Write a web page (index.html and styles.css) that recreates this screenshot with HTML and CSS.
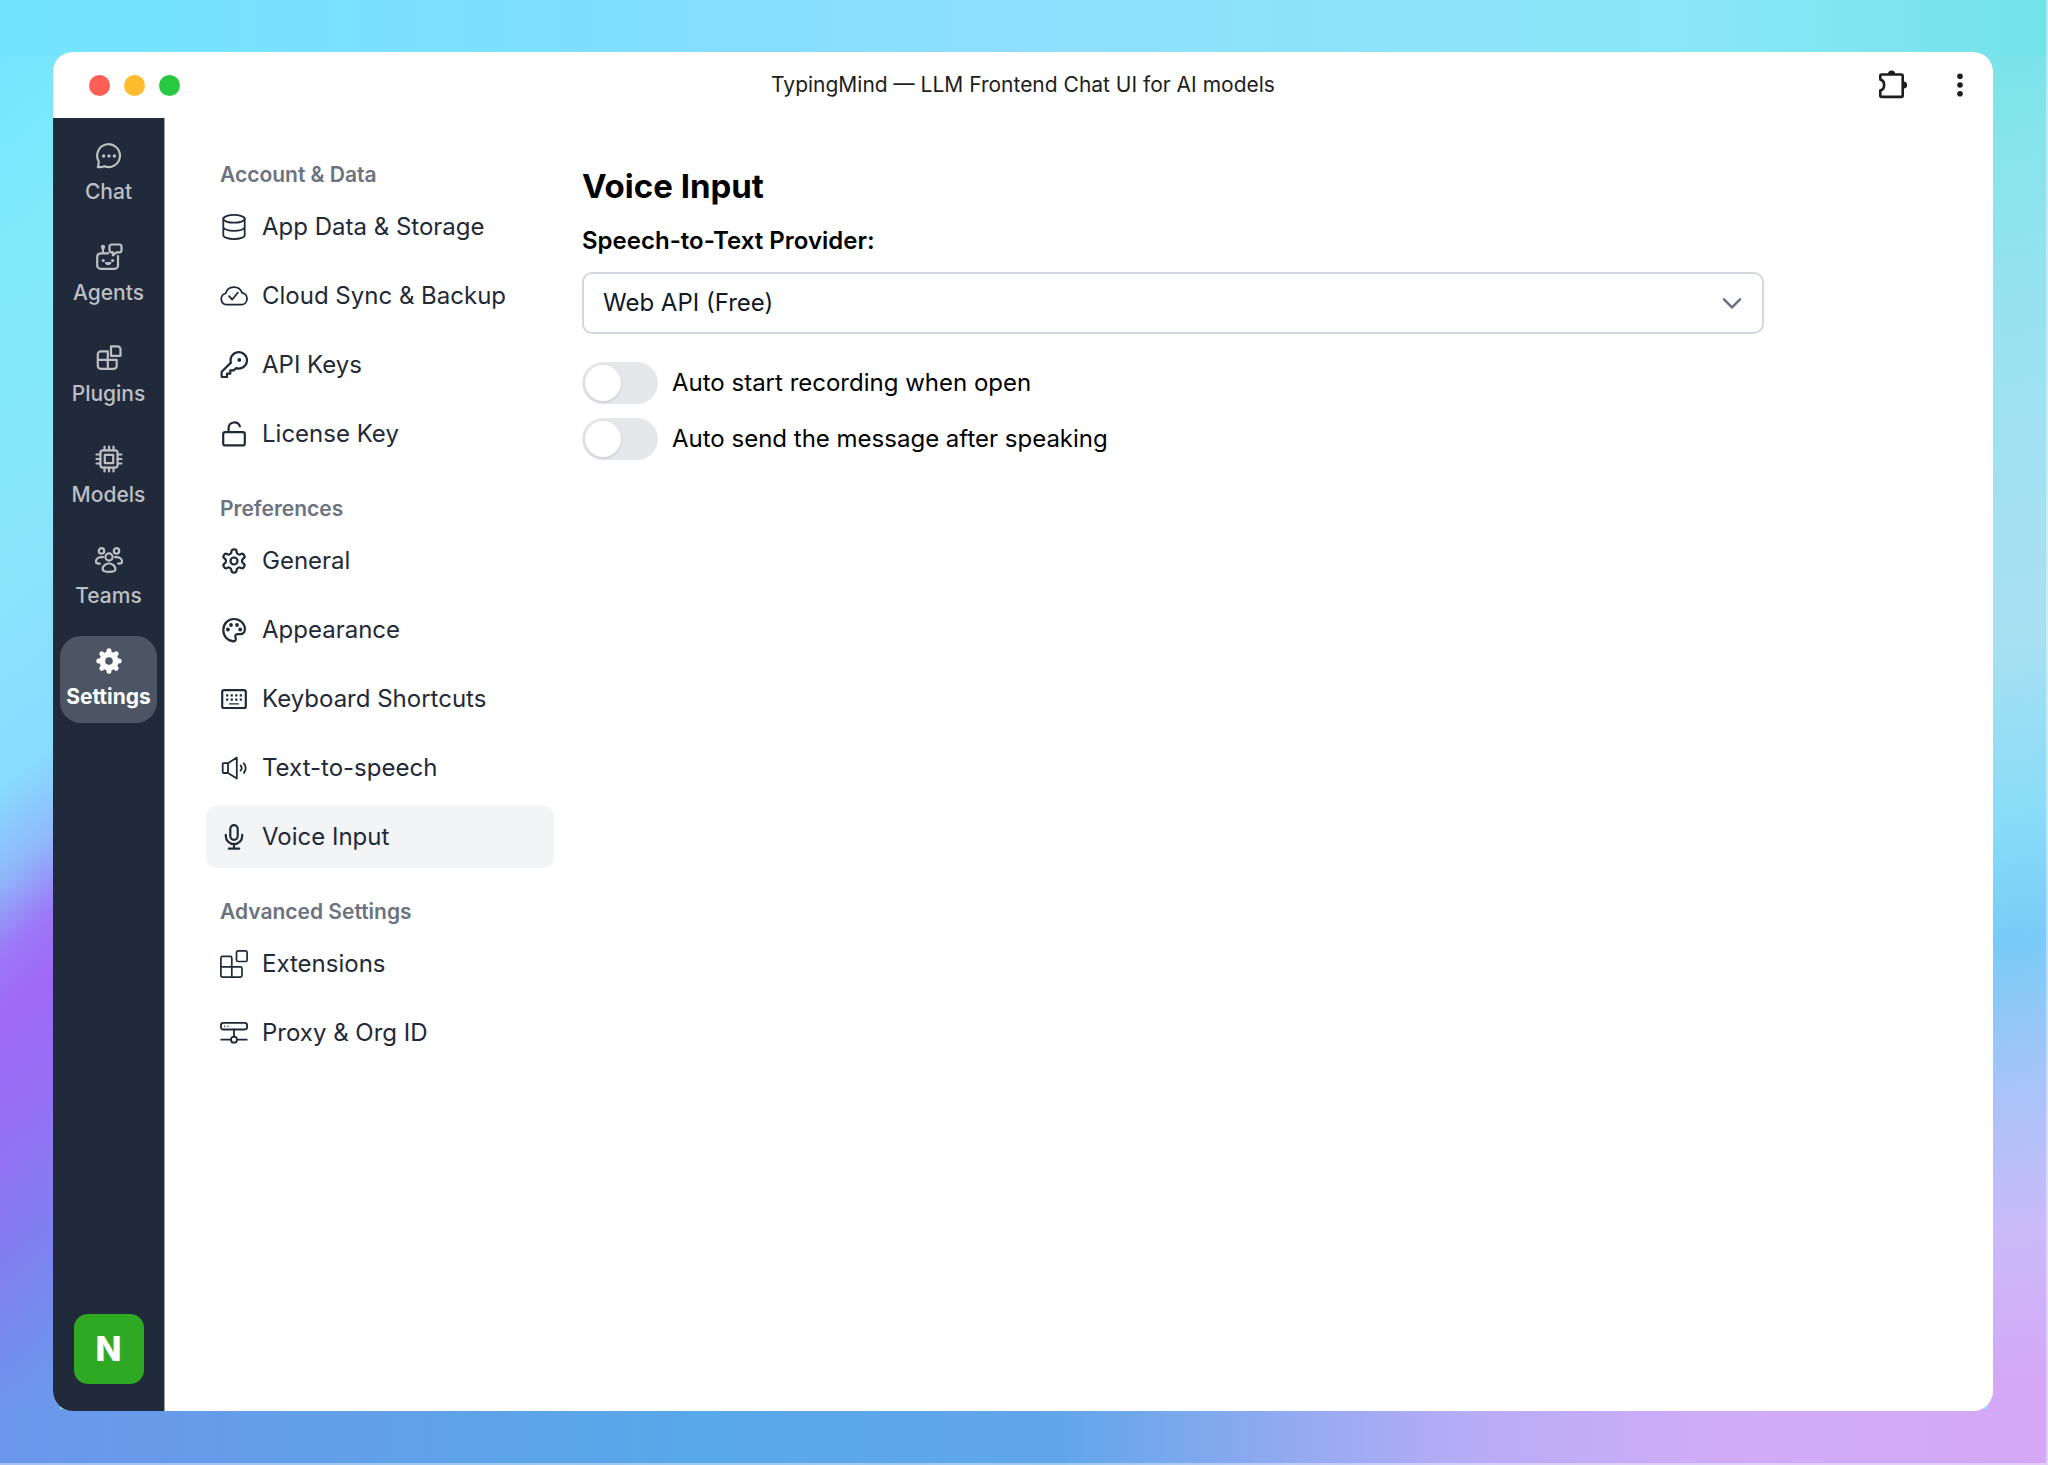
FILE: index.html
```
<!DOCTYPE html>
<html lang="en">
<head>
    <meta charset="UTF-8">
    <title>TypingMind — LLM Frontend Chat UI for AI models</title>
    <link rel="stylesheet" href="styles.css">
</head>

<body>

<div class="window">

    <header class="titlebar">
        <div class="lights">
            <span class="light red"></span>
            <span class="light yellow"></span>
            <span class="light green"></span>
        </div>
        <div class="title">TypingMind — LLM Frontend Chat UI for AI models</div>
        <div class="tools">
            <button class="tool" aria-label="Extensions">
                <svg viewBox="0 0 32 32"><path d="M4.300 10.600V6.800c0-.8.5-1.300 1.300-1.300h19.800c.8 0 1.300.5 1.300 1.300v19.800c0 .8-.5 1.300-1.300 1.300H5.600c-.8 0-1.300-.5-1.300-1.300V21.400c2.300-.4 3.800-2.700 3.800-5.400s-1.500-5-3.800-5.400z" stroke-width="2.600"/><path class="fill" d="M12 5a3.600 3.600 0 0 1 7.200 0zM27.500 12.400a3.600 3.600 0 0 1 0 7.200z"/></svg>
            </button>
            <button class="tool" aria-label="More">
                <svg viewBox="0 0 32 32"><g class="fill"><circle cx="16" cy="7.300" r="2.800"/><circle cx="16" cy="16" r="2.800"/><circle cx="16" cy="24.700" r="2.800"/></g></svg>
            </button>
        </div>
    </header>

    <div class="app">

        <nav class="rail">
            <a class="rail-item" href="#chat">
                <svg viewBox="0 0 28 28"><path d="M2.900 25.100c.5-1.600.7-3.500.9-5.600A11.400 11.400 0 1 1 9.300 24.200c-2 .9-4.300 1.200-6.400.9z"/><g class="fill"><circle cx="8.600" cy="14" r="1.700"/><circle cx="14" cy="14" r="1.700"/><circle cx="19.400" cy="14" r="1.700"/></g></svg>
                Chat
            </a>
            <a class="rail-item" href="#agents">
                <svg viewBox="0 0 28 28"><path d="M13.200 10.400H5.600a3.400 3.400 0 0 0-3.400 3.400v8.600a3.400 3.400 0 0 0 3.400 3.400h14a3.400 3.400 0 0 0 3.400-3.400V13M8 10.400V4.500M16.500 1.500h8a2 2 0 0 1 2 2v3.800a2 2 0 0 1-2 2h-3l-3.600 3v-3h-1.400a2 2 0 0 1-2-2V3.500a2 2 0 0 1 2-2zM11 20c.9 1.500 3.400 1.500 4.300 0z"/><g class="fill"><circle cx="8" cy="4" r="2.200"/><circle cx="8.200" cy="17.500" r="1.600"/><circle cx="17.600" cy="17.500" r="1.600"/></g></svg>
                Agents
            </a>
            <a class="rail-item" href="#plugins">
                <svg viewBox="0 0 28 28"><path d="M5.800 7.300h7v17.500h-7a3 3 0 0 1-3-3V10.300a3 3 0 0 1 3-3zM2.800 15.900h18.900v5.900a3 3 0 0 1-3 3h-5.900M16 2.300h6.500a3 3 0 0 1 3 3v6.500H16z"/></svg>
                Plugins
            </a>
            <a class="rail-item" href="#models">
                <svg viewBox="0 0 28 28"><rect x="5.400" y="5.400" width="17.200" height="17.200" rx="2.500"/><rect x="9.800" y="9.800" width="8.400" height="8.400"/><path d="M9.500 5.400V1.500M14 5.400V1.500M18.500 5.400V1.500M9.500 26.500v-3.900M14 26.500v-3.900M18.500 26.500v-3.900M5.400 9.500H1.500M5.400 14H1.500M5.400 18.500H1.500M26.500 9.500h-3.900M26.500 14h-3.900M26.500 18.500h-3.900"/></svg>
                Models
            </a>
            <a class="rail-item" href="#teams">
                <svg viewBox="0 0 28 28"><circle cx="14" cy="11" r="3.600"/><circle cx="6.500" cy="4.900" r="2.700"/><circle cx="21.500" cy="4.900" r="2.700"/><path d="M7.600 23.500c0-3.500 3-6 6.400-6s6.400 2.500 6.400 6c0 1.600-3 2.300-6.400 2.300s-6.400-.7-6.400-2.300zM8 11.100H6c-3 .2-5.100 2.300-5.100 4.400 0 1.400 1.600 2.100 4 2.100M20 11.100h2c3 .2 5.100 2.300 5.100 4.400 0 1.400-1.600 2.100-4 2.100"/></svg>
                Teams
            </a>
            <a class="rail-item active" href="#settings" aria-current="page">
                <svg viewBox="0 0 28 28"><circle class="fill" cx="14" cy="14" r="9.600"/><path d="M14 3.800v20.400M3.800 14h20.400M6.800 6.800l14.400 14.400M21.200 6.800L6.800 21.200" stroke-width="5"/><circle class="hole" cx="14" cy="14" r="3.800"/></svg>
                Settings
            </a>
            <button class="avatar" aria-label="Account">N</button>
        </nav>

        <nav class="menu">
            <h2>Account &amp; Data</h2>
            <ul>
                <li><a href="#data"><svg viewBox="0 0 28 28"><g stroke-width="1.800"><ellipse cx="14" cy="5.800" rx="10.700" ry="3.900"/><path d="M3.300 5.800v16.400c0 2.100 4.800 3.900 10.700 3.900s10.700-1.800 10.700-3.900V5.800M3.300 14c0 2.100 4.800 3.900 10.700 3.900s10.700-1.800 10.700-3.900"/></g></svg>App Data &amp; Storage</a></li>
                <li><a href="#sync"><svg viewBox="0 0 28 28"><path stroke-width="1.800" d="M6.500 22.700A5.700 5.700 0 0 1 5.600 11.500A8.600 8.600 0 0 1 22 10.800A6 6 0 0 1 21.500 22.700zM9 14.200l3.200 3.300 5.600-6.800"/></svg>Cloud Sync &amp; Backup</a></li>
                <li><a href="#keys"><svg viewBox="0 0 28 28"><path d="M10.900 11.600L2.200 20.200q-.6.6-.6 1.400v3.600q0 .8.8.8h4.600v-3.300h3.300v-3.300h3.300l2.600-2.300A8.200 8.200 0 1 0 10.900 11.600z"/><circle class="fill" cx="19.300" cy="8.900" r="1.900"/></svg>API Keys</a></li>
                <li><a href="#license"><svg viewBox="0 0 28 28"><rect x="3.200" y="12.200" width="21.600" height="13.200" rx="2"/><path d="M8.600 12V7.900a5.800 5.800 0 0 1 11.300-1.500"/></svg>License Key</a></li>
            </ul>

            <h2>Preferences</h2>
            <ul>
                <li><a href="#general"><svg viewBox="0 0 24 24"><path stroke-width="1.900" d="M12.220 2h-.44a2 2 0 0 0-2 2v.18a2 2 0 0 1-1 1.730l-.43.25a2 2 0 0 1-2 0l-.15-.08a2 2 0 0 0-2.730.73l-.22.38a2 2 0 0 0 .73 2.730l.15.1a2 2 0 0 1 1 1.720v.51a2 2 0 0 1-1 1.740l-.15.09a2 2 0 0 0-.73 2.730l.22.38a2 2 0 0 0 2.730.73l.15-.08a2 2 0 0 1 2 0l.43.25a2 2 0 0 1 1 1.730V20a2 2 0 0 0 2 2h.44a2 2 0 0 0 2-2v-.18a2 2 0 0 1 1-1.730l.43-.25a2 2 0 0 1 2 0l.15.08a2 2 0 0 0 2.730-.73l.22-.39a2 2 0 0 0-.73-2.730l-.15-.08a2 2 0 0 1-1-1.740v-.5a2 2 0 0 1 1-1.740l.15-.09a2 2 0 0 0 .73-2.730l-.22-.38a2 2 0 0 0-2.730-.73l-.15.08a2 2 0 0 1-2 0l-.43-.25a2 2 0 0 1-1-1.730V4a2 2 0 0 0-2-2z"/><circle stroke-width="1.900" cx="12" cy="12" r="3"/></svg>General</a></li>
                <li><a href="#appearance"><svg viewBox="0 0 28 28"><path d="M14 25.300C7.700 25.300 3.300 20.300 3.300 14S8 3 14 3s10.900 4.500 10.900 10.300c0 3-2.200 4.900-4.600 4.900h-3c-1.800 0-2.400 1.500-1.800 3.200.6 1.800.3 3.900-1.500 3.900z"/><g class="fill"><circle cx="7.900" cy="13.500" r="1.900"/><circle cx="11" cy="9" r="1.900"/><circle cx="17" cy="9" r="1.900"/><circle cx="20.200" cy="13.500" r="1.900"/></g></svg>Appearance</a></li>
                <li><a href="#shortcuts"><svg viewBox="0 0 28 28"><rect x="2.200" y="5.200" width="23.600" height="17.800" rx="1.800"/><path stroke-width="1.400" d="M9.500 18.900h9"/><path stroke-width="2.200" stroke-linecap="butt" stroke-dasharray="2.200 2.350" d="M6.100 10.300h16M6.100 14.700h16"/></svg>Keyboard Shortcuts</a></li>
                <li><a href="#speech"><svg viewBox="0 0 28 28"><path stroke-width="1.800" d="M8 9.200H3.600a.9.900 0 0 0-.9.900v8a.9.900 0 0 0 .9.900H8l8.800 5.600V3.600zM8 9.200V19M20.600 11.500a3.600 3.600 0 0 1 0 5.200M23.800 9.300a7 7 0 0 1 0 9.600"/></svg>Text-to-speech</a></li>
                <li><a class="active" href="#voice" aria-current="page"><svg viewBox="0 0 28 28"><rect x="10.300" y="2.200" width="7.400" height="14.600" rx="3.700"/><path d="M5.800 11.800v1.200a8.200 8.200 0 0 0 16.400 0v-1.200M14 21.200v4.400M8.800 25.600h10.400"/></svg>Voice Input</a></li>
            </ul>

            <h2>Advanced Settings</h2>
            <ul>
                <li><a href="#extensions"><svg viewBox="0 0 28 28"><g stroke-width="1.700"><rect x="16.500" y=".9" width="10.600" height="10.600" rx="1.600"/><path d="M2.500 6.400h7.700a1.600 1.600 0 0 1 1.600 1.600v8.800h8.600a1.600 1.600 0 0 1 1.600 1.600v7.100a1.600 1.600 0 0 1-1.600 1.600H2.500A1.600 1.600 0 0 1 .9 25.500V8a1.600 1.600 0 0 1 1.600-1.600zM.9 16.800h10.900v10.300"/></g></svg>Extensions</a></li>
                <li><a href="#proxy"><svg viewBox="0 0 28 28"><g stroke-width="1.800"><rect x=".9" y="3.900" width="26.200" height="6.600" rx="2.400"/><path d="M14 10.500v7.200M1.200 20.700H11M17 20.700h9.800"/><circle cx="14" cy="20.700" r="3"/></g><g class="fill"><circle cx="4.600" cy="7.200" r=".7"/><circle cx="8" cy="7.200" r=".7"/></g></svg>Proxy &amp; Org ID</a></li>
            </ul>
        </nav>

        <main class="content">
            <h1>Voice Input</h1>

            <label class="field-label" for="provider">Speech-to-Text Provider:</label>
            <div class="select">
                <select id="provider">
                    <option>Web API (Free)</option>
                </select>
                <svg viewBox="0 0 28 28"><path stroke-width="2.600" d="M6 10.300l8 8 8-8"/></svg>
            </div>

            <label class="toggle"><input type="checkbox"> Auto start recording when open</label>
            <label class="toggle"><input type="checkbox"> Auto send the message after speaking</label>
        </main>

    </div>
</div>

</body>
</html>
```
FILE: styles.css
```
* { box-sizing: border-box; }

body {
    display: flex;
    min-height: 100vh;
    margin: 0;
    padding: 52px 53px 52px 53px;
    border: solid rgba(255, 255, 255, 0.4);
    border-width: 0 2px 2px 0;
    font-family: Inter, "Liberation Sans", sans-serif;
    font-size: 24px;
    line-height: 34px;
    color: #000;
    /* wallpaper: bottom, top, left and right bands around the window */
    background:
        linear-gradient(to right, #6c97ec, #629fe8 16%, #58a8ea 34%, #62a6ea 52%, #8eaaf0 62%, #b8acf7 72%, #d0acf8 84%, #d4a8f7) left bottom / 100% 56px no-repeat,
        linear-gradient(to right, #72e4ff, #80deff 30%, #8edffd 50%, #8be7f9 82%, #72e3e8) left top / 100% 56px no-repeat,
        linear-gradient(140deg, #72e4ff, #82ebfb 20%, #8ae4fd 40%, #88dcff 52%, #8fb8fb 58%, #9c78f7 63%, #a069f7 67%, #9570f4 75%, #8080f0 84%, #6c97ec 94%) left top / 60px 100% no-repeat,
        linear-gradient(170deg, #72e3e8, #86e4ec 10%, #9be1f2 24%, #a8e0f2 43%, #88dcf8 56%, #78cbf7 64%, #a8c4f8 74%, #cbbaf8 84%, #d4a8f7 94%) right top / 60px 100% no-repeat,
        #8fdcf8;
}

svg {
    width: 28px;
    height: 28px;
    flex: none;
    fill: none;
    stroke: currentColor;
    stroke-width: 2.2;
    stroke-linecap: round;
    stroke-linejoin: round;
}
svg .fill { fill: currentColor; stroke: none; }
svg .hole { fill: #4b5563; stroke: none; }

a { color: inherit; text-decoration: none; }
button { padding: 0; border: 0; background: none; font: inherit; color: inherit; }

.window {
    flex: 1;
    display: flex;
    flex-direction: column;
    overflow: hidden;
    border-radius: 20px;
    background: #fff;
}

/* title bar */
.titlebar {
    display: grid;
    grid-template-columns: 1fr auto 1fr;
    align-items: center;
    height: 66px;
    padding: 0 17px;
    color: #1d1d20;
}
.lights { display: flex; gap: 14px; margin-left: 19px; }
.light { width: 21px; height: 21px; border-radius: 50%; }
.red    { background: #ff5f57; }
.yellow { background: #febc2e; }
.green  { background: #28c840; }
.title { font-size: 21px; }
.tools { display: flex; justify-content: flex-end; gap: 36px; }
.tool, .tool svg { display: block; width: 32px; height: 32px; }

.app { flex: 1; display: flex; }

/* left rail */
.rail {
    flex: none;
    display: flex;
    flex-direction: column;
    gap: 14px;
    width: 112px;
    padding: 13px 7px 27px;
    border-right: 1px solid #9aa0a8;
    background: #212a3a;
    color: #bcbfc4;
}
.rail-item {
    display: flex;
    flex-direction: column;
    align-items: center;
    gap: 7px;
    height: 87px;
    padding-top: 11px;
    border-radius: 21px;
    font-size: 21px;
    font-weight: 500;
    line-height: 30px;
}
.rail-item.active { background: #4b5563; color: #fff; font-weight: 700; }
.avatar {
    align-self: center;
    width: 70px;
    height: 70px;
    margin-top: auto;
    border-radius: 14px;
    background: #2fa823;
    color: #fff;
    font-size: 34px;
    font-weight: 800;
}

/* settings menu */
.menu { flex: none; width: 348px; margin: 43px 28px 0 41px; color: #1f2937; }
.menu h2 {
    margin: 30px 14px 7px;
    font-size: 21px;
    font-weight: 600;
    line-height: 28px;
    color: #6b7280;
}
.menu h2:first-child { margin-top: 0; }
.menu ul {
    display: flex;
    flex-direction: column;
    gap: 7px;
    margin: 0;
    padding: 0;
    list-style: none;
}
.menu a {
    display: flex;
    align-items: center;
    gap: 14px;
    height: 62px;
    padding: 0 14px;
    border-radius: 10px;
}
.menu a.active { background: #f3f4f6; }

/* voice input page */
.content { flex: 1; max-width: 1182px; margin: 47px 28px 0 0; }
h1 { margin: 0; font-size: 33px; font-weight: 700; line-height: 42px; }
.field-label { display: block; margin: 17px 0 14px; font-weight: 600; }

.select { display: grid; align-items: center; margin-bottom: 28px; }
.select > * { grid-area: 1 / 1; }
.select select {
    appearance: none;
    width: 100%;
    height: 62px;
    padding: 0 56px 0 19px;
    border: 2px solid #d4d7de;
    border-radius: 10px;
    background: #fff;
    font: inherit;
    color: #111827;
}
.select svg { justify-self: end; margin-right: 18px; color: #6b7280; pointer-events: none; }

.toggle { display: flex; align-items: center; gap: 14px; margin-bottom: 14px; }
.toggle input {
    appearance: none;
    width: 76px;
    height: 42px;
    margin: 0;
    padding: 3px;
    border-radius: 21px;
    background: #e5e7eb;
}
.toggle input::before {
    content: "";
    display: block;
    width: 36px;
    height: 36px;
    border-radius: 50%;
    background: #fff;
    box-shadow: 0 1px 3px rgba(0, 0, 0, 0.15);
}
.toggle input:checked { background: #2563eb; }
.toggle input:checked::before { margin-left: auto; }
```
